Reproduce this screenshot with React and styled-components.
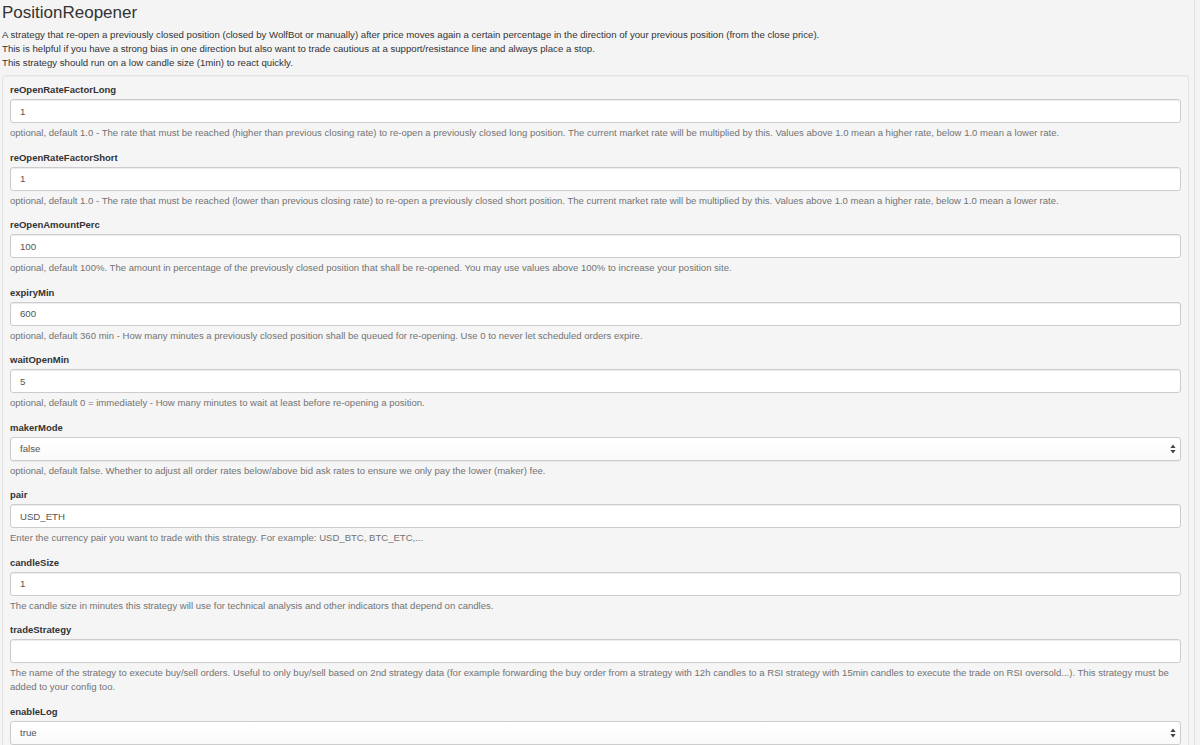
import styled, { createGlobalStyle } from 'styled-components';

const GlobalStyle = createGlobalStyle`
  html, body {
    margin: 0;
    padding: 0;
    background: #f4f4f4;
  }
  body {
    font-family: 'Liberation Sans', Arial, Helvetica, sans-serif;
    color: #333;
    overflow: hidden;
  }
`;

const fields = [
  {
    name: 'reOpenRateFactorLong',
    value: '1',
    help: 'optional, default 1.0 - The rate that must be reached (higher than previous closing rate) to re-open a previously closed long position. The current market rate will be multiplied by this. Values above 1.0 mean a higher rate, below 1.0 mean a lower rate.',
  },
  {
    name: 'reOpenRateFactorShort',
    value: '1',
    help: 'optional, default 1.0 - The rate that must be reached (lower than previous closing rate) to re-open a previously closed short position. The current market rate will be multiplied by this. Values above 1.0 mean a higher rate, below 1.0 mean a lower rate.',
  },
  {
    name: 'reOpenAmountPerc',
    value: '100',
    help: 'optional, default 100%. The amount in percentage of the previously closed position that shall be re-opened. You may use values above 100% to increase your position site.',
  },
  {
    name: 'expiryMin',
    value: '600',
    help: 'optional, default 360 min - How many minutes a previously closed position shall be queued for re-opening. Use 0 to never let scheduled orders expire.',
  },
  {
    name: 'waitOpenMin',
    value: '5',
    help: 'optional, default 0 = immediately - How many minutes to wait at least before re-opening a position.',
  },
  {
    name: 'makerMode',
    value: 'false',
    select: true,
    help: 'optional, default false. Whether to adjust all order rates below/above bid ask rates to ensure we only pay the lower (maker) fee.',
  },
  {
    name: 'pair',
    value: 'USD_ETH',
    help: 'Enter the currency pair you want to trade with this strategy. For example: USD_BTC, BTC_ETC,...',
  },
  {
    name: 'candleSize',
    value: '1',
    help: 'The candle size in minutes this strategy will use for technical analysis and other indicators that depend on candles.',
  },
  {
    name: 'tradeStrategy',
    value: '',
    help: 'The name of the strategy to execute buy/sell orders. Useful to only buy/sell based on 2nd strategy data (for example forwarding the buy order from a strategy with 12h candles to a RSI strategy with 15min candles to execute the trade on RSI oversold...). This strategy must be added to your config too.',
  },
  {
    name: 'enableLog',
    value: 'true',
    select: true,
    help: '',
  },
];

const App = () => {
  return (
    <Page>
      <GlobalStyle />
      <Title>PositionReopener</Title>
      <Intro>
        A strategy that re-open a previously closed position (closed by WolfBot or manually) after price moves again a certain percentage in the direction of your previous position (from the close price).
        <br />
        This is helpful if you have a strong bias in one direction but also want to trade cautious at a support/resistance line and always place a stop.
        <br />
        This strategy should run on a low candle size (1min) to react quickly.
      </Intro>
      <Well>
        {fields.map((f) => (
          <Group key={f.name}>
            <Label>{f.name}</Label>
            {f.select ? (
              <SelectBox>
                <span>{f.value}</span>
                <Arrows viewBox='0 0 6 10'>
                  <path d='M3 0.5 L5.6 4 H0.4 Z' />
                  <path d='M3 9.5 L5.6 6 H0.4 Z' />
                </Arrows>
              </SelectBox>
            ) : (
              <Input defaultValue={f.value} />
            )}
            {f.help && <Help>{f.help}</Help>}
          </Group>
        ))}
      </Well>
    </Page>
  );
};

const Page = styled.div`
  width: 1195px;
  min-height: 745px;
  box-sizing: border-box;
  padding: 0 5px 0 2px;
  border-right: 1px solid #e2e2e2;
`;

const Title = styled.h1`
  margin: 0;
  padding-top: 3px;
  font-size: 17px;
  font-weight: 400;
  line-height: 20px;
  color: #333;
`;

const Intro = styled.p`
  margin: 5px 0 0;
  font-size: 9.65px;
  line-height: 14px;
  color: #333;
`;

const Well = styled.div`
  margin-top: 5px;
  padding: 7px 7px 0;
  background: #f5f5f5;
  border: 1px solid #e3e3e3;
  border-radius: 3px;
  box-shadow: inset 0 1px 1px rgba(0, 0, 0, 0.04);
`;

const Group = styled.div`
  display: flex;
  flex-direction: column;
  padding-bottom: 10.5px;
`;

const Label = styled.label`
  font-size: 9.5px;
  font-weight: 700;
  line-height: 14px;
  color: #333;
  margin-bottom: 2px;
`;

const Input = styled.input`
  box-sizing: border-box;
  height: 24px;
  width: 100%;
  padding: 0 9px;
  font-family: 'Liberation Sans', Arial, sans-serif;
  font-size: 9.65px;
  color: #555;
  background: #fff;
  border: 1px solid #ccc;
  border-radius: 3px;
  box-shadow: inset 0 1px 1px rgba(0, 0, 0, 0.075);
  outline: none;
`;

const SelectBox = styled.div`
  box-sizing: border-box;
  height: 24px;
  display: flex;
  align-items: center;
  justify-content: space-between;
  padding: 0 4px 0 9px;
  font-size: 9.65px;
  color: #555;
  background: linear-gradient(#fff, #fafafa);
  border: 1px solid #ccc;
  border-radius: 3px;
  box-shadow: 0 1px 1px rgba(0, 0, 0, 0.05);
`;

const Arrows = styled.svg`
  width: 6px;
  height: 10px;
  fill: #444;
`;

const Help = styled.p`
  margin: 3px 0 0;
  font-size: 9.55px;
  line-height: 14px;
  color: #737373;
`;

export default App;
